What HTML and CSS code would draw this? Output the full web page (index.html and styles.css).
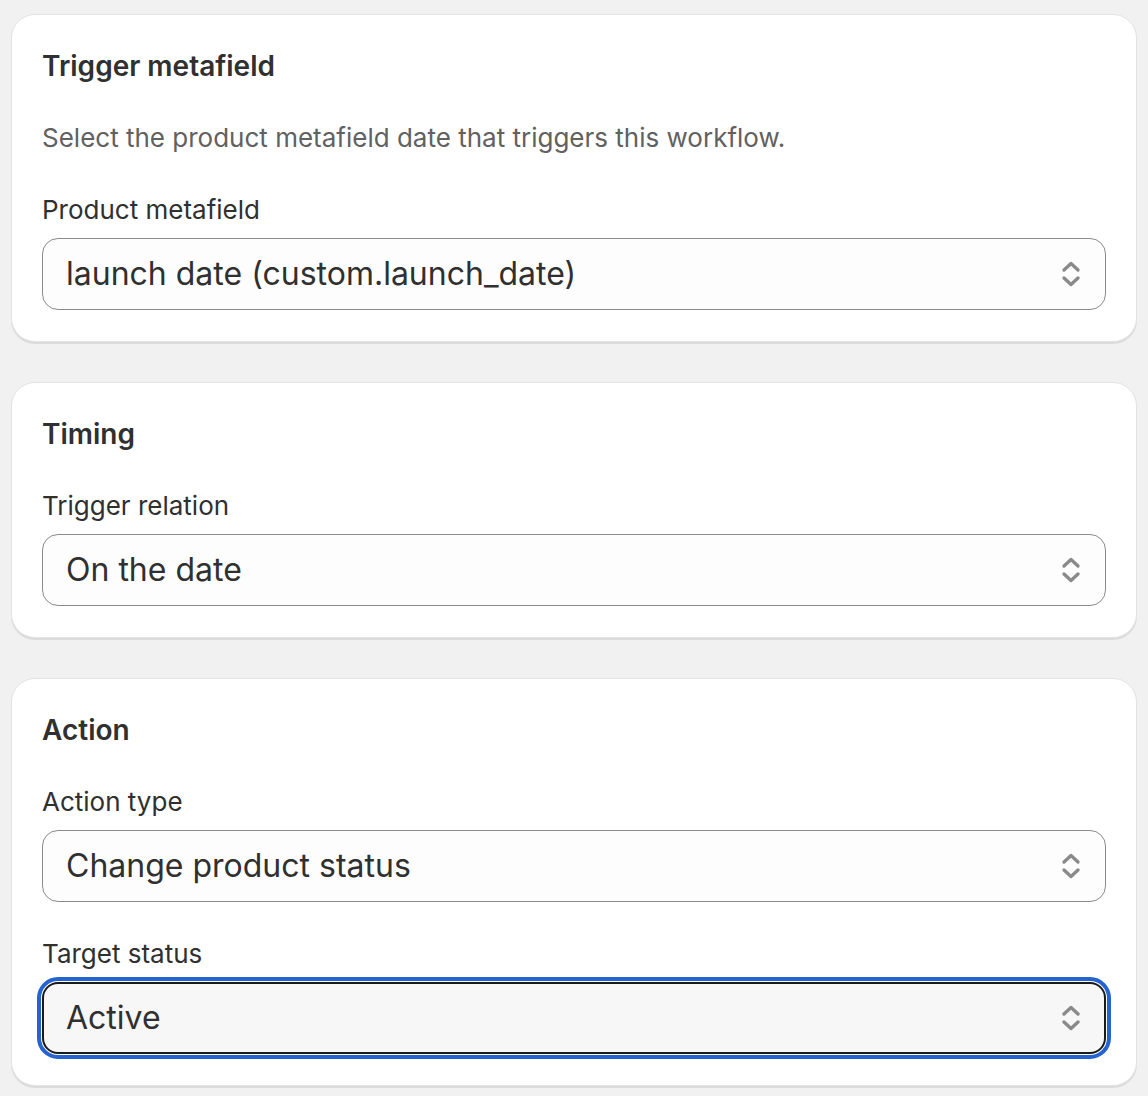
FILE: index.html
```html
<!DOCTYPE html>
<html lang="en">
<head>
    <meta charset="UTF-8">
    <meta name="viewport" content="width=device-width, initial-scale=1.0">
    <title>Workflow settings</title>
    <link rel="stylesheet" href="styles.css">
</head>
<body>
    <div class="page">
        <section class="card">
            <h2 class="card-title">Trigger metafield</h2>
            <p class="card-text">Select the product metafield date that triggers this workflow.</p>
            <div class="field">
                <label class="field-label" for="metafield">Product metafield</label>
                <div class="select">
                    <span class="select-value" id="metafield">launch date (custom.launch_date)</span>
                    <svg class="select-icon" viewBox="0 0 20 20"><path d="M6.5 8 10 4.8 13.5 8M6.5 12 10 15.2 13.5 12"/></svg>
                </div>
            </div>
        </section>

        <section class="card">
            <h2 class="card-title">Timing</h2>
            <div class="field">
                <label class="field-label" for="relation">Trigger relation</label>
                <div class="select">
                    <span class="select-value" id="relation">On the date</span>
                    <svg class="select-icon" viewBox="0 0 20 20"><path d="M6.5 8 10 4.8 13.5 8M6.5 12 10 15.2 13.5 12"/></svg>
                </div>
            </div>
        </section>

        <section class="card">
            <h2 class="card-title">Action</h2>
            <div class="field">
                <label class="field-label" for="action">Action type</label>
                <div class="select">
                    <span class="select-value" id="action">Change product status</span>
                    <svg class="select-icon" viewBox="0 0 20 20"><path d="M6.5 8 10 4.8 13.5 8M6.5 12 10 15.2 13.5 12"/></svg>
                </div>
            </div>
            <div class="field">
                <label class="field-label" for="status">Target status</label>
                <div class="select focused">
                    <span class="select-value" id="status">Active</span>
                    <svg class="select-icon" viewBox="0 0 20 20"><path d="M6.5 8 10 4.8 13.5 8M6.5 12 10 15.2 13.5 12"/></svg>
                </div>
            </div>
        </section>
    </div>
</body>
</html>
```

FILE: styles.css
```css
body {
    margin: 0;
    background-color: #f1f1f1;
    font-family: Inter, "Noto Sans", sans-serif;
    color: #303030;
}

.page {
    display: flex;
    flex-direction: column;
    gap: 40px;
    padding: 14px 11px;
}

.card {
    display: flex;
    flex-direction: column;
    gap: 32px;
    padding: 31px 30px;
    background-color: #fff;
    border: 1px solid #e3e3e3;
    border-radius: 24px;
    box-shadow: 0 2px 0 rgba(0, 0, 0, 0.09);
}

.card-title {
    margin: 0;
    font-size: 28px;
    line-height: 40px;
    font-weight: 600;
}

.card-text {
    margin: 0;
    font-size: 26px;
    line-height: 40px;
    color: #616161;
}

.field {
    display: flex;
    flex-direction: column;
    gap: 8px;
}

.field-label {
    font-size: 26px;
    line-height: 40px;
}

.select {
    display: flex;
    align-items: center;
    justify-content: space-between;
    height: 72px;
    box-sizing: border-box;
    padding: 0 14px 0 23px;
    background-color: #fdfdfd;
    border: 1px solid #8a8a8a;
    border-radius: 16px;
}

.select-value {
    font-size: 32px;
    line-height: 40px;
}

.select-icon {
    width: 40px;
    height: 40px;
    fill: none;
    stroke: #8a8a8a;
    stroke-width: 1.7;
    stroke-linecap: round;
    stroke-linejoin: round;
}

.select.focused {
    background-color: #f7f7f7;
    border: 2px solid #1a1a1a;
    padding-left: 22px;
    padding-right: 13px;
    outline: 4px solid #2563d0;
    outline-offset: 1px;
}
```
